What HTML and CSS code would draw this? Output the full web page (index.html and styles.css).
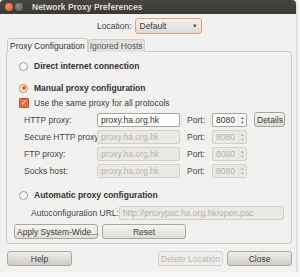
FILE: index.html
```html
<!DOCTYPE html>
<html>
<head>
    <title>Network Proxy Preferences</title>
    <link rel="stylesheet" href="styles.css">
</head>
<body>
    <div class="window">
        <div class="titlebar">
            <span class="wbtn close-btn"></span>
            <span class="wbtn min-btn"></span>
            <span class="title">Network Proxy Preferences</span>
        </div>
        <div class="content">
            <div class="location-row">
                <span>Location:</span>
                <div class="combo">Default<span class="arrow">&#9662;</span></div>
            </div>
            <div class="tabs">
                <div class="tab active">Proxy Configuration</div>
                <div class="tab">Ignored Hosts</div>
            </div>
            <div class="panel">
                <div class="option"><span class="radio"></span><b>Direct internet connection</b></div>
                <div class="option manual"><span class="radio on"></span><b>Manual proxy configuration</b></div>
                <div class="option check-row"><span class="check">&#10003;</span>Use the same proxy for all protocols</div>

                <div class="proxy-grid">
                    <span class="lbl">HTTP proxy:</span>
                    <input class="host" type="text" value="proxy.ha.org.hk">
                    <span class="lbl">Port:</span>
                    <div class="spin"><span>8080</span><span class="arrows">&#9652;<br>&#9662;</span></div>
                    <button class="btn details">Details</button>

                    <span class="lbl">Secure HTTP proxy:</span>
                    <input class="host" type="text" value="proxy.ha.org.hk" disabled>
                    <span class="lbl">Port:</span>
                    <div class="spin off"><span>8080</span><span class="arrows">&#9652;<br>&#9662;</span></div>
                    <span></span>

                    <span class="lbl">FTP proxy:</span>
                    <input class="host" type="text" value="proxy.ha.org.hk" disabled>
                    <span class="lbl">Port:</span>
                    <div class="spin off"><span>8080</span><span class="arrows">&#9652;<br>&#9662;</span></div>
                    <span></span>

                    <span class="lbl">Socks host:</span>
                    <input class="host" type="text" value="proxy.ha.org.hk" disabled>
                    <span class="lbl">Port:</span>
                    <div class="spin off"><span>8080</span><span class="arrows">&#9652;<br>&#9662;</span></div>
                    <span></span>
                </div>

                <div class="option auto"><span class="radio"></span><b>Automatic proxy configuration</b></div>
                <div class="url-row">
                    <span class="lbl">Autoconfiguration URL:</span>
                    <input class="url" type="text" value="http://proxypac.ha.org.hk/open.pac" disabled>
                </div>
                <div class="panel-buttons">
                    <button class="btn">Apply System-Wide...</button>
                    <button class="btn">Reset</button>
                </div>
            </div>
            <div class="bottom-buttons">
                <button class="btn big">Help</button>
                <span class="spacer"></span>
                <button class="btn big" disabled>Delete Location</button>
                <button class="btn big">Close</button>
            </div>
        </div>
    </div>
</body>
</html>
```

FILE: styles.css
```css
body {
    margin: 0;
    padding: 0;
    background-color: #f7f7f7;
    font-family: "Liberation Sans", Arial, sans-serif;
    font-size: 8.5px;
    color: #3c3c3c;
    white-space: nowrap;
}

.window {
    width: 296px;
    height: 272px;
    background-color: #f2f1f0;
    border-radius: 4px 4px 0 0;
    box-shadow: 0 1px 3px rgba(0, 0, 0, 0.35);
    overflow: hidden;
}

.titlebar {
    height: 14px;
    background: linear-gradient(#48463f, #3a3935);
    display: flex;
    align-items: center;
    padding-left: 5px;
}

.wbtn {
    width: 8px;
    height: 8px;
    border-radius: 50%;
    margin-right: 2px;
}

.close-btn {
    background: radial-gradient(circle at 40% 35%, #f98a5a, #e0531c);
}

.min-btn {
    background: radial-gradient(circle at 40% 35%, #8a8983, #5d5c57);
}

.title {
    color: #dfdbd2;
    font-weight: bold;
    font-size: 8.5px;
    margin-left: 7px;
}

.content {
    padding: 4px 4px 0 6px;
}

.location-row {
    display: flex;
    align-items: center;
    gap: 3px;
    height: 16px;
    padding-left: 91px;
}

.combo {
    width: 57px;
    height: 14px;
    border: 1px solid #ef9b72;
    border-radius: 3px;
    background: linear-gradient(#f4f3f2, #dcdad6);
    padding: 0 4px;
    display: flex;
    align-items: center;
    justify-content: space-between;
}

.arrow {
    font-size: 7px;
    color: #555;
}

.tabs {
    display: flex;
    margin-top: 4px;
    margin-left: 1px;
    height: 14px;
    position: relative;
    z-index: 1;
}

.tab {
    padding: 0 1px;
    line-height: 13px;
    border: 1px solid #cfcdc9;
    border-bottom: none;
    border-radius: 3px 3px 0 0;
    background-color: #e4e2df;
    color: #555;
    margin-top: 1px;
}

.tab.active {
    background-color: #f2f1f0;
    color: #333;
    margin-top: 0;
    line-height: 14px;
    padding: 0 2px;
}

.panel {
    border: 1px solid #cfcdc9;
    border-radius: 0 3px 3px 3px;
    height: 185px;
    margin-top: -1px;
    padding: 6px 0 0 7px;
}

.option {
    display: flex;
    align-items: center;
    height: 12px;
    margin-top: 2px;
}

.option b {
    color: #333;
}

.manual {
    margin-top: 10px;
}

.check-row {
    margin-top: 3px;
}

.radio {
    width: 7px;
    height: 7px;
    border: 1px solid #9d9a95;
    border-radius: 50%;
    background-color: #fdfdfd;
    margin: 0 6px 0 5px;
    position: relative;
}

.radio.on {
    border-color: #d86d3e;
}

.radio.on::after {
    content: "";
    position: absolute;
    left: 1.5px;
    top: 1.5px;
    width: 4px;
    height: 4px;
    border-radius: 50%;
    background-color: #e0602a;
}

.check {
    width: 8px;
    height: 8px;
    border: 1px solid #c0552a;
    border-radius: 1px;
    background-color: #e57245;
    color: #fff;
    font-size: 7px;
    line-height: 8px;
    text-align: center;
    margin: 0 5px 0 5px;
}

.proxy-grid {
    display: grid;
    grid-template-columns: 73px 90px 25px 42px 31px;
    row-gap: 3px;
    align-items: center;
    margin-top: 3px;
    padding-left: 10px;
}

.lbl {
    color: #444;
}

.host {
    width: 83px;
    height: 14px;
    box-sizing: border-box;
    border: 1px solid #a8a59f;
    border-radius: 2px;
    padding: 0 3px;
    font: inherit;
    color: #333;
    background-color: #fff;
    margin: 0;
}

.host:disabled,
.url:disabled {
    background-color: #ebe9e6;
    border-color: #d4d1cc;
    color: #b5b2ad;
}

.spin {
    width: 35px;
    height: 14px;
    box-sizing: border-box;
    border: 1px solid #a8a59f;
    border-radius: 2px;
    background-color: #fff;
    display: flex;
    justify-content: space-between;
    align-items: center;
    padding-left: 3px;
    color: #333;
}

.spin .arrows {
    font-size: 5px;
    line-height: 5px;
    width: 8px;
    text-align: center;
    color: #666;
    border-left: 1px solid #e2e0dc;
    height: 12px;
    padding-top: 1px;
    box-sizing: border-box;
}

.spin.off {
    background-color: #ebe9e6;
    border-color: #d4d1cc;
    color: #b5b2ad;
}

.spin.off .arrows {
    color: #b5b2ad;
}

.btn {
    font: inherit;
    color: #3c3c3c;
    border: 1px solid #a9a6a0;
    border-radius: 3px;
    background: linear-gradient(#f7f6f5, #dedcd8);
    height: 15px;
    padding: 0 2px;
    margin: 0;
}

.details {
    width: 31px;
}

.auto {
    margin-top: 11px;
}

.url-row {
    display: flex;
    align-items: center;
    margin-top: 5px;
    padding-left: 17px;
}

.url {
    width: 171px;
    height: 14px;
    box-sizing: border-box;
    border: 1px solid #a8a59f;
    border-radius: 2px;
    padding: 0 3px;
    font: inherit;
    margin-left: auto;
    margin-right: 7px;
}

.panel-buttons {
    display: flex;
    gap: 4px;
    margin-top: 4px;
}

.panel-buttons .btn {
    width: 84px;
}

.bottom-buttons {
    display: flex;
    align-items: center;
    margin-top: 7px;
    padding-left: 1px;
}

.spacer {
    flex: 1;
}

.btn.big {
    width: 65px;
    height: 15px;
    margin-left: 4px;
    background: linear-gradient(#eeedeb, #cfccc7);
}

.btn.big:first-child {
    margin-left: 0;
}

.btn:disabled {
    color: #b8b5b0;
    border-color: #d4d1cc;
    background: #efedeb;
}
```
